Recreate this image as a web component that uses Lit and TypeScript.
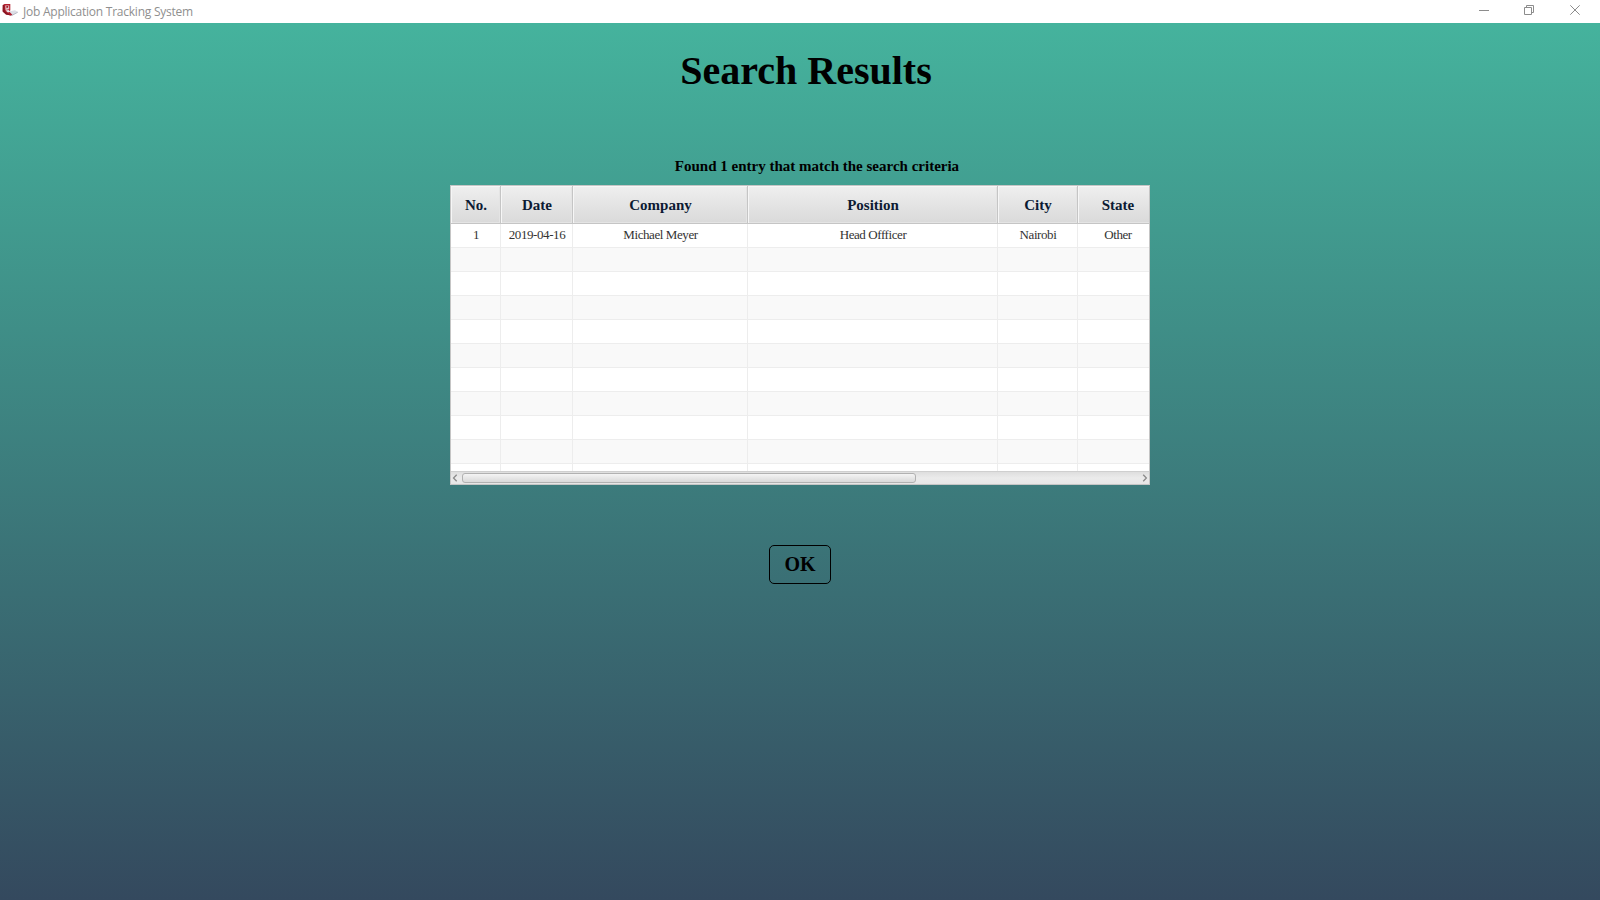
import { LitElement, html, css, svg } from "lit";
import { customElement } from "lit/decorators.js";

const COLUMNS = ["No.", "Date", "Company", "Position", "City", "State"];
const ROWS = [["1", "2019-04-16", "Michael Meyer", "Head Offficer", "Nairobi", "Other"]];
const VISIBLE_ROWS = 11;

@customElement("window-bar")
export class WindowBar extends LitElement {
  static styles = css`
    :host { display: flex; height: 23px; background: #fff; justify-content: space-between; flex: none; }
    .name { display: flex; }
    .logo { width: 18px; height: 18px; flex: none; display: block; }
    .title { font: 12px/24px "Open Sans", "Noto Sans", sans-serif; color: #8f8f8f; margin-left: 5px; letter-spacing: -0.24px; white-space: nowrap; }
    .controls { display: block; width: 140px; height: 23px; }
  `;
  render() {
    return html`
      <div class="name">
        <svg class="logo" viewBox="0 0 18 18">
          <path d="M8.5 11.5 L15 10.3 L18 12 L12 15.5 Z" fill="#dcdee6" />
          <path d="M10 14.6 L12 15.4 L17.8 12.2" fill="none" stroke="#a9acb8" stroke-width=".8" />
          <path d="M2.8 5 L4.5 4 H10.3 V10.6 L9 11.3 L12.3 14.8 L11 15.6 L6 14.5 L2.7 11.5 Z" fill="#b3202f" />
          <path d="M2.8 5 L4.3 5.2 L4.8 11.2 L11 15.6 L6 14.5 L2.7 11.5 Z" fill="#8a1622" />
          <path d="M5.2 5.4 H9.2 V9.2 L5.5 10 Z" fill="#e3c3c9" />
          <path d="M6.3 6 H8.2 V7.4 L6.5 8.2 Z" fill="#a51b28" />
          <path d="M5.5 10.6 L8.6 10 L10 11.8 L8 12.4 Z" fill="#eceef2" />
        </svg>
        <span class="title">Job Application Tracking System</span>
      </div>
      <svg class="controls" viewBox="0 0 140 23" fill="none" stroke="#8c8c8c">
        <path d="M19 10.5 H29" />
        <path d="M64.5 7.5 H71.5 V14.5 H64.5 Z M66.5 7.5 V5.5 H73.5 V12.5 H71.5" />
        <path d="M110.3 5.3 L119.7 14.7 M119.7 5.3 L110.3 14.7" />
      </svg>
    `;
  }
}

@customElement("results-table")
export class ResultsTable extends LitElement {
  static styles = css`
    :host { display: flex; flex-direction: column; box-sizing: border-box; width: 700px; height: 300px; border: 1px solid #c5c5c5; background: #fff; overflow: hidden; font-family: "Liberation Serif", "Times New Roman", serif; }
    .viewport { flex: 1; min-height: 0; overflow: hidden; }
    .line { display: grid; grid-template-columns: 50px 72px 175px 250px 80px 80px; grid-template-rows: 100%; width: 707px; height: 24px; }
    .line.alt { background: #f9f9f9; }
    .cell { box-sizing: border-box; padding-left: 1px; border-right: 1px solid #ededed; border-bottom: 1px solid #ededed; font-size: 13px; line-height: 22px; text-align: center; color: #333; white-space: nowrap; letter-spacing: -0.42px; }
    .line.head { height: 38px; background: linear-gradient(#efefef, #d9d9d9); }
    .head .cell { padding-left: 1px; border-color: #c5c5c5; box-shadow: inset 1px 1px #f6f6f6, inset -1px -1px #e4e4e4; font-size: 15px; font-weight: bold; line-height: 39px; color: #0c1a33; letter-spacing: 0; }
    .scroll { display: flex; align-items: center; box-sizing: border-box; height: 13px; flex: none; border-top: 1px solid #cfcfcf; background: linear-gradient(#dedede, #ebebeb 50%, #e6e6e6); justify-content: space-between; }
    .arrow { width: 11px; height: 12px; display: block; }
    .track { flex: 1; display: flex; }
    .thumb { box-sizing: border-box; width: 454px; height: 10px; border: 1px solid #b1b1b1; border-radius: 3px; background: linear-gradient(#f4f4f4, #d9d9d9); }
  `;
  private line(values: string[], kind: string) {
    return html`<div class="line ${kind}">${COLUMNS.map((_, i) => html`<div class="cell">${values[i] ?? ""}</div>`)}</div>`;
  }
  private arrow(points: string) {
    return html`<svg class="arrow" viewBox="0 0 11 12">${svg`<path d=${points} fill="none" stroke="#8b8b8b" stroke-width="1.3" />`}</svg>`;
  }
  render() {
    return html`
      <div class="viewport">
        ${this.line(COLUMNS, "head")}
        ${Array.from({ length: VISIBLE_ROWS }, (_, i) => this.line(ROWS[i] ?? [], i % 2 ? "alt" : ""))}
      </div>
      <div class="scroll">
        ${this.arrow("M5.7 2.7 L2.5 6 L5.7 9.3")}
        <div class="track"><div class="thumb"></div></div>
        ${this.arrow("M5.2 2.7 L8.4 6 L5.2 9.3")}
      </div>
    `;
  }
}

@customElement("app-root")
export class AppRoot extends LitElement {
  static styles = css`
    :host { display: flex; flex-direction: column; width: 100%; height: 100vh; overflow: hidden; font-family: "Liberation Serif", "Times New Roman", serif; }
    .page { flex: 1; display: flex; flex-direction: column; align-items: center; background: linear-gradient(#45b39d, #34495e); color: #000; }
    .heading { margin: 25px 0 0 12px; font-size: 40px; line-height: 46px; font-weight: bold; white-space: nowrap; }
    .summary { margin: 62px 0 0 34px; font-size: 15px; line-height: 20px; font-weight: bold; white-space: nowrap; }
    .table { margin-top: 9px; }
    .ok { margin: 60px 0 0; padding: 0; box-sizing: border-box; width: 62px; height: 39px; border: 1px solid #000; border-radius: 5px; background: transparent; font: bold 20px/37px "Liberation Serif", "Times New Roman", serif; color: #000; }
  `;
  render() {
    return html`
      <window-bar></window-bar>
      <main class="page">
        <h1 class="heading">Search Results</h1>
        <p class="summary">Found 1 entry that match the search criteria</p>
        <results-table class="table"></results-table>
        <button class="ok">OK</button>
      </main>
    `;
  }
}
